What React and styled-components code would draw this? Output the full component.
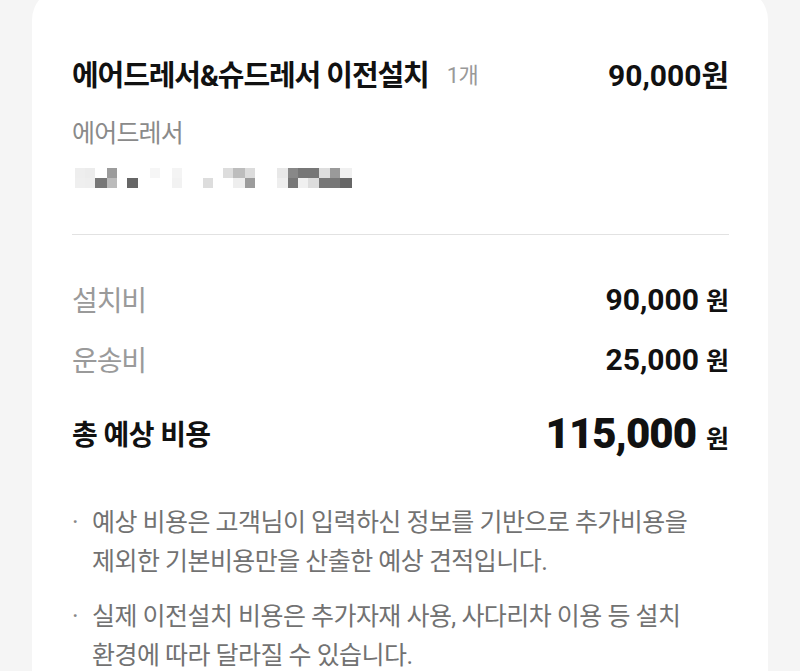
import React from "react";
import styled, { createGlobalStyle } from "styled-components";

const GlobalStyle = createGlobalStyle`
  html, body {
    margin: 0;
    padding: 0;
    background: #f5f5f5;
    font-family: "Roboto", "Noto Sans CJK KR", sans-serif;
    overflow: hidden;
  }
`;

const Page = styled.div`
  width: 800px;
  height: 671px;
  overflow: hidden;
`;

const Card = styled.div`
  margin: -12px 32px 0 32px;
  padding: 70px 39px 40px 40px;
  background: #fff;
  border-radius: 32px;
`;

const HeaderRow = styled.div`
  display: flex;
  align-items: center;
  height: 36px;
`;

const Title = styled.h2`
  margin: 0;
  font-size: 29px;
  font-weight: 700;
  letter-spacing: -1.1px;
  color: #111;
  line-height: 36px;
`;

const Count = styled.span`
  margin-left: 18px;
  font-size: 22px;
  letter-spacing: -0.5px;
  color: #999;
  line-height: 36px;
`;

const Price = styled.span`
  margin-left: auto;
  font-size: 30px;
  font-weight: 700;
  color: #111;
  line-height: 36px;
`;

const Option = styled.div`
  margin-top: 24px;
  font-size: 25px;
  letter-spacing: -0.8px;
  line-height: 32px;
  color: #8a8a8a;
`;

const Mosaic = styled.svg`
  display: block;
  margin-top: 18px;
  margin-left: 3px;
`;

const Divider = styled.hr`
  margin: 46px 0 0;
  border: 0;
  border-top: 1px solid #e2e2e2;
`;

const FeeList = styled.div`
  display: flex;
  flex-direction: column;
  margin-top: 44px;
`;

const FeeRow = styled.div`
  display: flex;
  align-items: center;
  justify-content: space-between;
  height: ${(p) => (p.$total ? "50px" : "40px")};
  margin-top: ${(p) => (p.$total ? "29px" : p.$first ? "0" : "20px")};
`;

const FeeLabel = styled.span`
  font-size: 28px;
  letter-spacing: ${(p) => (p.$total ? "-0.6px" : "-1.1px")};
  font-weight: ${(p) => (p.$total ? 700 : 400)};
  color: ${(p) => (p.$total ? "#111" : "#9a9a9a")};
`;

const Amount = styled.span`
  display: flex;
  align-items: baseline;
  gap: ${(p) => (p.$total ? "10px" : "7px")};
  color: #111;
  font-weight: 700;
`;

const Number = styled.span`
  font-size: ${(p) => (p.$total ? "42px" : "30px")};
  letter-spacing: ${(p) => (p.$total ? "-1px" : "0")};
  font-weight: ${(p) => (p.$total ? 900 : 700)};
`;

const Won = styled.span`
  font-size: 25px;
`;

const Notes = styled.ul`
  list-style: none;
  margin: 45px 0 0;
  padding: 0;
  display: flex;
  flex-direction: column;
  gap: 16px;
`;

const Note = styled.li`
  display: flex;
  font-size: 25px;
  letter-spacing: -0.55px;
  line-height: 39px;
  color: #727272;
  word-break: keep-all;
`;

const Bullet = styled.span`
  flex: 0 0 20px;
  color: #888;
`;

const mosaic = [
  [0, 0, 10, "#eeeeee"], [10, 0, 10, "#ececec"], [32, 0, 10, "#9c9c9c"],
  [75, 0, 10, "#f6f6f6"], [97, 0, 10, "#f4f4f4"], [148, 0, 10, "#dddddd"],
  [158, 0, 12, "#bdbdbd"], [170, 0, 10, "#dcdcdc"], [202, 0, 11, "#e8e8e8"],
  [213, 0, 10, "#888"], [223, 0, 10, "#777"], [233, 0, 11, "#777"],
  [244, 0, 11, "#dddddd"], [255, 0, 10, "#9a9a9a"], [265, 0, 12, "#f0f0f0"],
  [0, 10, 10, "#efefef"], [10, 10, 10, "#eeeeee"], [20, 10, 12, "#777"],
  [32, 10, 10, "#bbbbbb"], [52, 10, 11, "#666"], [97, 10, 10, "#f2f2f2"],
  [128, 10, 10, "#dddddd"], [158, 10, 12, "#eeeeee"], [170, 10, 10, "#9c9c9c"],
  [202, 10, 11, "#eeeeee"], [213, 10, 10, "#777"], [223, 10, 10, "#f0f0f0"],
  [233, 10, 11, "#dddddd"], [244, 10, 11, "#777"], [255, 10, 10, "#777"],
  [265, 10, 12, "#666"],
];

const fees = [
  { label: "설치비", value: "90,000" },
  { label: "운송비", value: "25,000" },
];

const notes = [
  "예상 비용은 고객님이 입력하신 정보를 기반으로 추가비용을 제외한 기본비용만을 산출한 예상 견적입니다.",
  "실제 이전설치 비용은 추가자재 사용, 사다리차 이용 등 설치 환경에 따라 달라질 수 있습니다.",
];

export default function App() {
  return (
    <Page>
      <GlobalStyle />
      <Card>
        <HeaderRow>
          <Title>에어드레서&슈드레서 이전설치</Title>
          <Count>1개</Count>
          <Price>90,000원</Price>
        </HeaderRow>
        <Option>에어드레서</Option>
        <Mosaic width="280" height="20" viewBox="0 0 280 20">
          {mosaic.map(([x, y, w, c], i) => (
            <rect key={i} x={x} y={y} width={w} height="10" fill={c} />
          ))}
        </Mosaic>
        <Divider />
        <FeeList>
          {fees.map((f, i) => (
            <FeeRow key={f.label} $first={i === 0}>
              <FeeLabel>{f.label}</FeeLabel>
              <Amount>
                <Number>{f.value}</Number>
                <Won>원</Won>
              </Amount>
            </FeeRow>
          ))}
          <FeeRow $total>
            <FeeLabel $total>총 예상 비용</FeeLabel>
            <Amount $total>
              <Number $total>115,000</Number>
              <Won>원</Won>
            </Amount>
          </FeeRow>
        </FeeList>
        <Notes>
          {notes.map((n) => (
            <Note key={n}>
              <Bullet>·</Bullet>
              <span>{n}</span>
            </Note>
          ))}
        </Notes>
      </Card>
    </Page>
  );
}
